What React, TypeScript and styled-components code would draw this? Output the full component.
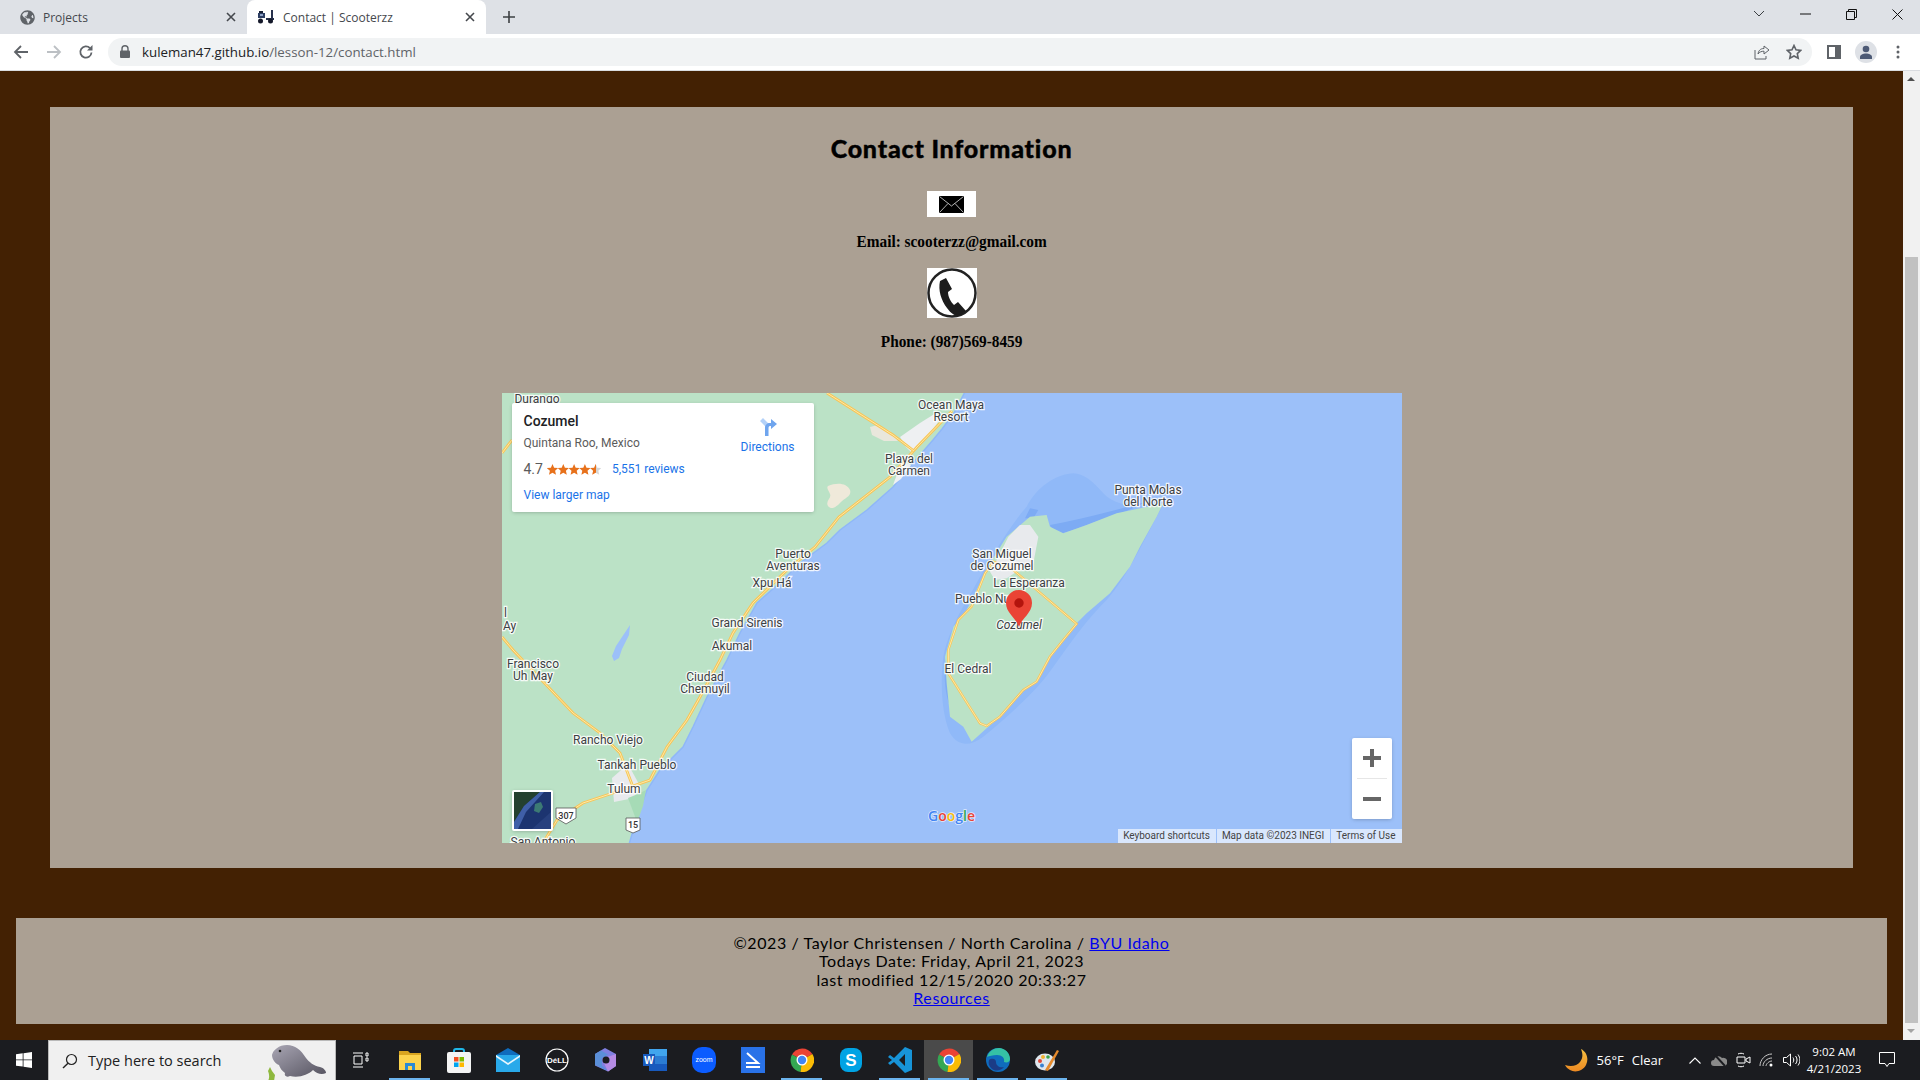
import styled, { createGlobalStyle } from "styled-components"
import { FaGlobeAmericas } from "react-icons/fa"
import { ReactNode } from "react"

const GlobalStyle = createGlobalStyle`
  html, body { margin: 0; padding: 0; height: 100%; overflow: hidden; }
  * { box-sizing: border-box; }
`

// browser chrome

function CloseIcon() {
  return (
    <svg width="10" height="10" viewBox="0 0 10 10">
      <path d="M1 1l8 8M9 1l-8 8" stroke="#45484d" strokeWidth="1.6" />
    </svg>
  )
}

function ScooterFavicon() {
  return (
    <svg width="18" height="14" viewBox="0 0 18 14">
      <path d="M1 3h7v5H1z" fill="#2c3e63" />
      <path d="M2 1h4v2H2z" fill="#1a2238" />
      <path d="M9 8h8v2H9zM14 0h2v9h-2z" fill="#27314c" />
      <path d="M3 4h3v2H3z" fill="#8fa3c8" />
      <circle cx="3.500" cy="11" r="2.500" fill="#15192a" />
      <circle cx="13.500" cy="11" r="2.500" fill="#15192a" />
    </svg>
  )
}

function BrowserTop() {
  return (
    <>
      <TabStrip>
        <Tab>
          <FaGlobeAmericas size={15} color="#5f6368" />
          <TabTitle>Projects</TabTitle>
          <CloseIcon />
        </Tab>
        <Tab $active>
          <ScooterFavicon />
          <TabTitle>Contact | Scooterzz</TabTitle>
          <CloseIcon />
        </Tab>
        <NewTab>
          <svg width="12" height="12" viewBox="0 0 12 12">
            <path d="M6 0v12M0 6h12" stroke="#3c4043" strokeWidth="1.6" />
          </svg>
        </NewTab>
        <WindowButtons>
          <WindowButton>
            <svg width="12" height="8" viewBox="0 0 12 8">
              <path d="M1 1l5 5 5-5" fill="none" stroke="#3c4043" />
            </svg>
          </WindowButton>
          <WindowButton>
            <svg width="11" height="2" viewBox="0 0 11 2">
              <path d="M0 1h11" stroke="#111" />
            </svg>
          </WindowButton>
          <WindowButton>
            <svg width="11" height="11" viewBox="0 0 11 11">
              <path d="M.5 2.500h8v8h-8zM2.500 2.500v-2h8v8h-2" fill="none" stroke="#111" />
            </svg>
          </WindowButton>
          <WindowButton>
            <svg width="11" height="11" viewBox="0 0 11 11">
              <path d="M.5.500l10 10M10.500.500l-10 10" stroke="#111" />
            </svg>
          </WindowButton>
        </WindowButtons>
      </TabStrip>
      <Toolbar>
        <NavButton>
          <svg width="16" height="16" viewBox="0 0 16 16">
            <path d="M15 8H2M8 2L2 8l6 6" fill="none" stroke="#5f6368" strokeWidth="1.8" />
          </svg>
        </NavButton>
        <NavButton>
          <svg width="16" height="16" viewBox="0 0 16 16">
            <path d="M1 8h13M8 2l6 6-6 6" fill="none" stroke="#bcc0c4" strokeWidth="1.8" />
          </svg>
        </NavButton>
        <NavButton>
          <svg width="16" height="16" viewBox="0 0 16 16">
            <path d="M13.500 8.500a5.600 5.600 0 1 1-1.500-4.300" fill="none" stroke="#5f6368" strokeWidth="1.8" />
            <path d="M14.500 1v5.500H9z" fill="#5f6368" />
          </svg>
        </NavButton>
        <Omnibox>
          <svg width="10" height="13" viewBox="0 0 10 13">
            <path d="M2 6V3.800a3 3 0 0 1 6 0V6" fill="none" stroke="#5f6368" strokeWidth="1.4" />
            <rect y="5.500" width="10" height="7.500" rx="1" fill="#5f6368" />
          </svg>
          <Url>
            kuleman47.github.io<UrlPath>/lesson-12/contact.html</UrlPath>
          </Url>
          <OmniActions>
            <svg width="16" height="16" viewBox="0 0 16 16">
              <path d="M15 6l-5-4v2.500C6 4.500 4.500 7 4 10c1.500-2 3.500-2.800 6-2.800V10zM1 6v9h11v-3" fill="none" stroke="#5f6368" />
            </svg>
            <svg width="16" height="16" viewBox="0 0 16 16">
              <path d="M8 1.500l2 4.300 4.700.6-3.400 3.200.9 4.700L8 12l-4.200 2.300.9-4.700L1.300 6.400 6 5.800z" fill="none" stroke="#5f6368" strokeWidth="1.600" />
            </svg>
          </OmniActions>
        </Omnibox>
        <ToolbarRight>
          <svg width="14" height="14" viewBox="0 0 14 14">
            <path d="M0 0h14v14H0z" fill="#5f6368" />
            <path d="M2 2h6v10H2z" fill="#fff" />
          </svg>
          <Avatar>
            <svg width="14" height="14" viewBox="0 0 14 14">
              <circle cx="7" cy="4" r="3.300" fill="#4d5a75" />
              <path d="M1 14v-2c0-2 3-3.500 6-3.500s6 1.500 6 3.500v2z" fill="#4d5a75" />
            </svg>
          </Avatar>
          <MenuDots width="4" height="14" viewBox="0 0 4 14">
            <circle cx="2" cy="2" r="1.500" fill="#5f6368" />
            <circle cx="2" cy="7" r="1.500" fill="#5f6368" />
            <circle cx="2" cy="12" r="1.500" fill="#5f6368" />
          </MenuDots>
        </ToolbarRight>
      </Toolbar>
    </>
  )
}

// map

const mainland =
  "-5,-5 465,-5 452,20 440,36 431,47 411,70 391,94 365,117 338,137 325,150 298,170 281,187 255,210 238,240 225,267 205,304 191,334 181,354 158,377 145,397 135,424 126,455 -5,455"
const highway =
  "450,18 415,54 388,84 337,124 313,154 285,177 251,210 231,240 218,267 198,304 185,327 165,354 148,387 111,400 81,410 55,427 41,450"
const sideRoad = "0,244 11,257 71,320 98,340 118,360 131,394"
const topRoad = "325,0 391,42 412,58"

function Road({ points }: { points: string }) {
  return (
    <>
      <polyline points={points} fill="none" stroke="#f8c555" strokeWidth="2.800" />
      <polyline points={points} fill="none" stroke="#fde8a8" strokeWidth="1" />
    </>
  )
}

function Shield({ x, y, label, $wide }: { x: number; y: number; label: string; $wide?: boolean }) {
  return (
    <g transform={`translate(${x} ${y})`}>
      <path
        d={$wide ? "M-10-8h20v10l-10 6-10-6z" : "M-7-7h14v12l-7 3-7-3z"}
        fill="#fff"
        stroke="#555"
        strokeWidth=".8"
      />
      <ShieldText y="3" textAnchor="middle">{label}</ShieldText>
    </g>
  )
}

function MapDrawing() {
  return (
    <MapSvg viewBox="0 0 900 450">
      <rect width="900" height="450" fill="#9cc0f9" />
      <polygon points={mainland} fill="#bbe2c6" stroke="#8fb7f8" strokeWidth="1.500" />
      <path d="M326 93c9-4 19-3 22 4 2 6-5 8-9 12s-9 9-13 4c-3-5 4-8 2-12-1-3-4-6-2-8z" fill="#efe9da" />
      <path d="M368 34l8-2 12 6 8 10-14 0-12-6z" fill="#e9e7dc" />
      <path d="M398 44l20-14 16-10 6 4-18 24-12 12-6-6z" fill="#eef0f2" />
      <path d="M391 92l6-16 8-6 4 2-10 14z" fill="#eef0f2" />
      <path d="M110 385l16-14 12 22-6 12-20 4z" fill="#e8eaed" />
      <path d="M126 405l9 24-4 12 10-28 3-16-8 4z" fill="#a6dbb6" />
      <path d="M128 232l-1 10-7 14-3 9-5 3-2-5 4-10 8-12z" fill="#9cc0f9" />

      <Road points={highway} />
      <Road points={sideRoad} />
      <Road points={topRoad} />
      <Road points="0,60 10,47" />

      <g transform="translate(428 57) scale(.3333)">
        <path
          d="M430 70C360 75 310 130 290 170C250 215 190 310 150 380C120 440 60 520 40 620C30 700 35 790 60 850C85 890 120 890 160 860C220 810 290 750 340 690C390 630 440 540 530 450C600 370 640 270 700 165C640 170 560 175 520 130C490 95 460 70 430 70Z"
          fill="#90b9f8"
        />
        <path d="M360 225C420 215 520 190 640 158C600 185 520 205 470 225C430 240 390 255 375 250Z" fill="#7dabf4" />
        <polygon points="285,205 300,175 325,180 310,205" fill="#7dabf4" />
        <path d="M45 640C55 590 60 570 70 540C60 620 65 700 75 790C55 770 40 720 45 640Z" fill="#80adf4" />
        <polygon
          points="300,200 350,195 360,230 400,250 470,225 560,190 700,160 680,200 630,290 600,350 540,430 470,490 440,520 400,570 360,620 320,695 280,720 210,800 170,835 125,875 100,830 60,800 50,700 45,620 70,530 110,480 150,400 180,340 230,260"
          fill="#bbe2c6"
        />
        <polygon points="270,225 300,225 325,260 310,340 260,365 230,385 195,390 180,365 200,330 235,260" fill="#e8eaed" />
        <polygon
          points="190,335 250,360 440,522 400,570 360,620 320,695 280,720 210,800 170,828 150,820 55,670 55,600 85,510 125,470 165,370"
          fill="none"
          stroke="#f8c555"
          strokeWidth="7"
        />
        <polygon
          points="190,335 250,360 440,522 400,570 360,620 320,695 280,720 210,800 170,828 150,820 55,670 55,600 85,510 125,470 165,370"
          fill="none"
          stroke="#fde8a8"
          strokeWidth="3"
        />
      </g>

      <MapLabel x="35" y="10" textAnchor="middle">Durango</MapLabel>
      <MapLabel x="449" y="16" textAnchor="middle">Ocean Maya</MapLabel>
      <MapLabel x="449" y="28" textAnchor="middle">Resort</MapLabel>
      <MapLabel x="407" y="70" textAnchor="middle">Playa del</MapLabel>
      <MapLabel x="407" y="82" textAnchor="middle">Carmen</MapLabel>
      <MapLabel x="291" y="165" textAnchor="middle">Puerto</MapLabel>
      <MapLabel x="291" y="177" textAnchor="middle">Aventuras</MapLabel>
      <MapLabel x="270" y="194" textAnchor="middle">Xpu Há</MapLabel>
      <MapLabel x="245" y="234" textAnchor="middle">Grand Sirenis</MapLabel>
      <MapLabel x="230" y="257" textAnchor="middle">Akumal</MapLabel>
      <MapLabel x="2" y="224">l</MapLabel>
      <MapLabel x="1" y="237">Ay</MapLabel>
      <MapLabel x="31" y="275" textAnchor="middle">Francisco</MapLabel>
      <MapLabel x="31" y="287" textAnchor="middle">Uh May</MapLabel>
      <MapLabel x="203" y="288" textAnchor="middle">Ciudad</MapLabel>
      <MapLabel x="203" y="300" textAnchor="middle">Chemuyil</MapLabel>
      <MapLabel x="106" y="351" textAnchor="middle">Rancho Viejo</MapLabel>
      <MapLabel x="135" y="376" textAnchor="middle">Tankah Pueblo</MapLabel>
      <MapLabel x="122" y="400" textAnchor="middle">Tulum</MapLabel>
      <MapLabel x="41" y="453" textAnchor="middle">San Antonio</MapLabel>
      <MapLabel x="646" y="101" textAnchor="middle">Punta Molas</MapLabel>
      <MapLabel x="646" y="113" textAnchor="middle">del Norte</MapLabel>
      <MapLabel x="500" y="165" textAnchor="middle">San Miguel</MapLabel>
      <MapLabel x="500" y="177" textAnchor="middle">de Cozumel</MapLabel>
      <MapLabel x="527" y="194" textAnchor="middle">La Esperanza</MapLabel>
      <MapLabel x="453" y="210">Pueblo Nuevo</MapLabel>
      <MapLabel x="517" y="236" textAnchor="middle" fontStyle="italic">Cozumel</MapLabel>
      <MapLabel x="466" y="280" textAnchor="middle">El Cedral</MapLabel>

      <Shield x={64} y={423} label="307" $wide />
      <Shield x={131} y={432} label="15" />

      <path d="M517 234c-3-9-13-14-13-24a13 13 0 0 1 26 0c0 10-10 15-13 24z" fill="#ea4335" />
      <circle cx="517" cy="210" r="4.700" fill="#b3140d" />

      <GoogleMark x="426" y="428">
        <tspan fill="#4285f4">G</tspan>
        <tspan fill="#ea4335">o</tspan>
        <tspan fill="#fbbc05">o</tspan>
        <tspan fill="#4285f4">g</tspan>
        <tspan fill="#34a853">l</tspan>
        <tspan fill="#ea4335">e</tspan>
      </GoogleMark>
    </MapSvg>
  )
}

function Stars() {
  const star = "M5.500 0l1.600 3.700 4 .4-3 2.700.9 3.900-3.500-2-3.500 2 .9-3.900-3-2.700 4-.4z"
  return (
    <svg width="54" height="11" viewBox="0 0 54 11">
      <defs>
        <linearGradient id="half">
          <stop offset="55%" stopColor="#e7711b" />
          <stop offset="55%" stopColor="#d6d6d6" />
        </linearGradient>
      </defs>
      {[0, 1, 2, 3].map((i) => (
        <path key={i} d={star} transform={`translate(${i * 10.800} 0)`} fill="#e7711b" />
      ))}
      <path d={star} transform="translate(43.200 0)" fill="url(#half)" />
    </svg>
  )
}

function MapEmbed() {
  return (
    <MapFrame>
      <MapDrawing />
      <InfoCard>
        <InfoMain>
          <PlaceName>Cozumel</PlaceName>
          <PlaceRegion>Quintana Roo, Mexico</PlaceRegion>
          <RatingRow>
            <RatingValue>4.7</RatingValue>
            <Stars />
            <MapLink>5,551 reviews</MapLink>
          </RatingRow>
          <MapLink>View larger map</MapLink>
        </InfoMain>
        <Directions>
          <svg width="18" height="19" viewBox="0 0 18 19">
            <path d="M1 4l3-3 6 6v12H6V9z" fill="#b3d1f8" />
            <path d="M6 19v-8c0-3 2-5 5-5h1V2l6 5-6 5V9h-1c-1 0-2 1-2 2v8z" fill="#6fa5ee" />
          </svg>
          <MapLink>Directions</MapLink>
        </Directions>
      </InfoCard>
      <SatelliteThumb>
        <svg width="37" height="37" viewBox="0 0 37 37">
          <rect width="37" height="37" fill="#1c3470" />
          <path d="M0 0h26L10 14 0 30z" fill="#24402f" />
          <path d="M0 30l10-16L26 0h4L12 20 4 37H0z" fill="#3f5fa8" />
          <path d="M21 12l6-2 2 5-4 6-5-2z" fill="#3c7a74" />
          <path d="M37 20v17H18z" fill="#27407e" />
        </svg>
      </SatelliteThumb>
      <ZoomControl>
        <ZoomButton>
          <svg width="18" height="18" viewBox="0 0 18 18">
            <path d="M9 0v18M0 9h18" stroke="#666" strokeWidth="4" />
          </svg>
        </ZoomButton>
        <ZoomDivider />
        <ZoomButton>
          <svg width="18" height="4" viewBox="0 0 18 4">
            <path d="M0 2h18" stroke="#666" strokeWidth="4" />
          </svg>
        </ZoomButton>
      </ZoomControl>
      <Attribution>
        <AttributionItem>Keyboard shortcuts</AttributionItem>
        <AttributionItem>Map data ©2023 INEGI</AttributionItem>
        <AttributionItem>Terms of Use</AttributionItem>
      </Attribution>
    </MapFrame>
  )
}

// taskbar

function ChromeLogo() {
  return (
    <svg width="24" height="24" viewBox="0 0 24 24">
      <path d="M12 12L2 6.500A12 12 0 0 1 22.400 6z" fill="#ea4335" />
      <path d="M12 12l-10-5.500A12 12 0 0 0 10.500 24z" fill="#34a853" />
      <path d="M12 12l10.400-6A12 12 0 0 1 10.500 24z" fill="#fbbc05" />
      <circle cx="12" cy="12" r="5.500" fill="#fff" />
      <circle cx="12" cy="12" r="4.200" fill="#4285f4" />
    </svg>
  )
}

function Manatee() {
  return (
    <ManateeArt width="66" height="40" viewBox="0 0 66 40">
      <defs>
        <linearGradient id="manatee" x1="0" y1="0" x2="1" y2="1">
          <stop offset="0" stopColor="#a9a6b4" />
          <stop offset="1" stopColor="#55535f" />
        </linearGradient>
      </defs>
      <path d="M2 40c2-4 1-7 0-10l2-4 2 4 3 4-1 6z" fill="#8eb83e" />
      <path
        d="M6 14c1-5 7-10 15-10 8 0 14 5 19 13 3 4 8 8 14 9 4 1 6 4 6 6-4 2-9 1-13-3-5 5-14 8-23 6-4 2-6-1-5-3-3-2-5-5-6-8-3-1-7-5-7-10z"
        fill="url(#manatee)"
      />
      <circle cx="14" cy="10" r="1.300" fill="#222" />
    </ManateeArt>
  )
}

function TaskIcon({ children, $active, $running }: { children: ReactNode; $active?: boolean; $running?: boolean }) {
  return (
    <TaskSlot $active={$active}>
      {children}
      {$running && <RunningBar />}
    </TaskSlot>
  )
}

function Taskbar() {
  return (
    <Bar>
      <StartButton>
        <svg width="16" height="16" viewBox="0 0 16 16">
          <path d="M0 2.300l6.700-1v6.200H0zM7.500 1.200L16 0v7.500H7.500zM0 8.300h6.700v6.300L0 13.700zM7.500 8.300H16V16l-8.500-1.200z" fill="#fff" />
        </svg>
      </StartButton>
      <SearchBox>
        <svg width="16" height="16" viewBox="0 0 16 16">
          <circle cx="9.500" cy="6.500" r="5" fill="none" stroke="#222" strokeWidth="1.200" />
          <path d="M6 10.200L1 15" stroke="#222" strokeWidth="1.400" />
        </svg>
        <SearchText>Type here to search</SearchText>
        <Manatee />
      </SearchBox>
      <TaskIcon>
        <svg width="16" height="16" viewBox="0 0 16 16">
          <path d="M0 1h10M0 15h10M1 4h8v8H1zM13 1h2v3h-2zM13 6h2v3h-2z" fill="none" stroke="#fff" />
        </svg>
      </TaskIcon>
      <TaskIcon $running>
        <svg width="22" height="20" viewBox="0 0 22 20">
          <path d="M0 1h9l2 2h11v4H0z" fill="#d9a520" />
          <path d="M0 5h22v15H0z" fill="#fcd34d" />
          <path d="M6 13h10v7H6z" fill="#2a8ad4" />
          <path d="M9 16h4v4H9z" fill="#fcd34d" />
        </svg>
      </TaskIcon>
      <TaskIcon>
        <svg width="24" height="25" viewBox="0 0 24 25">
          <path d="M7 5V3a2 2 0 0 1 2-2h6a2 2 0 0 1 2 2v2" fill="none" stroke="#1fb6e8" strokeWidth="2" />
          <rect y="4" width="24" height="21" rx="2" fill="#f4f4f4" />
          <path d="M7 9h4.500v4.500H7z" fill="#f25022" />
          <path d="M12.500 9H17v4.500h-4.500z" fill="#7fba00" />
          <path d="M7 14.500h4.500V19H7z" fill="#00a4ef" />
          <path d="M12.500 14.500H17V19h-4.500z" fill="#ffb900" />
        </svg>
      </TaskIcon>
      <TaskIcon>
        <svg width="24" height="24" viewBox="0 0 24 24">
          <path d="M12 0l12 7v17H0V7z" fill="#0f6cbd" />
          <path d="M0 7h24v17H0z" fill="#29a9ea" />
          <path d="M0 7l12 8 12-8v2l-12 8L0 9z" fill="#e8f6fd" />
        </svg>
      </TaskIcon>
      <TaskIcon>
        <svg width="24" height="24" viewBox="0 0 24 24">
          <circle cx="12" cy="12" r="11" fill="none" stroke="#fff" strokeWidth="1.200" />
          <DellText x="12" y="15" textAnchor="middle">DéLL</DellText>
        </svg>
      </TaskIcon>
      <TaskIcon>
        <svg width="21" height="24" viewBox="0 0 21 24">
          <path d="M10 0l11 6v12l-8 5.500-13-6V6z" fill="#7f7fe0" />
          <path d="M0 6l6-3.500 7 4-6 4v7l6 5.500-13-6z" fill="#5b8fd8" />
          <path d="M7 11l14-5v12l-8 5.500z" fill="#b58be4" />
          <circle cx="11" cy="12" r="3.500" fill="#1b1c20" />
        </svg>
      </TaskIcon>
      <TaskIcon>
        <svg width="24" height="24" viewBox="0 0 24 24">
          <path d="M6 1h18v22H6z" fill="#2b7cd3" />
          <path d="M6 1h18v7H6z" fill="#41a5ee" />
          <path d="M6 16h18v7H6z" fill="#185abd" />
          <rect y="6" width="12" height="12" fill="#185abd" />
          <WordText x="6" y="16" textAnchor="middle">W</WordText>
        </svg>
      </TaskIcon>
      <TaskIcon>
        <svg width="24" height="26" viewBox="0 0 24 26">
          <rect width="24" height="26" rx="10" fill="#0b5cff" />
          <ZoomText x="12" y="15" textAnchor="middle">zoom</ZoomText>
        </svg>
      </TaskIcon>
      <TaskIcon>
        <svg width="24" height="26" viewBox="0 0 24 26">
          <rect width="24" height="26" fill="#2972e8" />
          <path d="M6 6l11 10H5M5 20h14" fill="none" stroke="#fff" strokeWidth="2" />
        </svg>
      </TaskIcon>
      <TaskIcon $running>
        <ChromeLogo />
      </TaskIcon>
      <TaskIcon>
        <svg width="22" height="24" viewBox="0 0 22 24">
          <rect width="22" height="24" rx="8" fill="#00a3e4" />
          <SkypeText x="11" y="18" textAnchor="middle">S</SkypeText>
        </svg>
      </TaskIcon>
      <TaskIcon $running>
        <svg width="24" height="26" viewBox="0 0 24 26">
          <path d="M17 0l7 3v20l-7 3L6 15l-4 3-2-2 4-3-4-3 2-2 4 3zm0 7l-6 6 6 6z" fill="#1794d8" />
        </svg>
      </TaskIcon>
      <TaskIcon $active $running>
        <ChromeLogo />
      </TaskIcon>
      <TaskIcon $running>
        <svg width="24" height="24" viewBox="0 0 24 24">
          <circle cx="12" cy="12" r="12" fill="#0f6cbd" />
          <path d="M1 9C3 3 8 0 13 0c6 0 11 5 11 11 0 3-3 4-6 3 1-4-2-7-7-7-4 0-8 1-10 2z" fill="#35c1a5" />
          <path d="M10 14c0 4 4 6 8 5-3 4-9 5-13 1-2-2-3-5-2-8 2-2 7-2 7 2z" fill="#1b3c86" />
        </svg>
      </TaskIcon>
      <TaskIcon $running>
        <svg width="24" height="24" viewBox="0 0 24 24">
          <ellipse cx="10" cy="14" rx="10" ry="8.500" fill="#dfe7ee" />
          <circle cx="5" cy="13" r="2" fill="#e04a3a" />
          <circle cx="8" cy="9" r="2" fill="#f2b134" />
          <circle cx="13" cy="9" r="1.800" fill="#3ca34a" />
          <circle cx="7" cy="17.500" r="2" fill="#3b82d0" />
          <path d="M10 22L22 2l2 1L13 23z" fill="#e58a2d" />
        </svg>
      </TaskIcon>

      <Tray>
        <Weather>
          <svg width="24" height="24" viewBox="0 0 24 24">
            <defs>
              <linearGradient id="moon" x1="0" y1="0" x2="0" y2="1">
                <stop offset="0" stopColor="#f5c042" />
                <stop offset="1" stopColor="#ee8a22" />
              </linearGradient>
            </defs>
            <path d="M16 1c6 3 8 10 5 16s-11 8-16 5c-2-1-4-3-5-5 6 2 12 1 15-3s3-8 1-13z" fill="url(#moon)" />
          </svg>
          <WeatherText>56°F</WeatherText>
          <WeatherText>Clear</WeatherText>
        </Weather>
        <TrayIcon>
          <svg width="12" height="7" viewBox="0 0 12 7">
            <path d="M.5 6.500L6 1l5.500 5.500" fill="none" stroke="#fff" strokeWidth="1.100" />
          </svg>
        </TrayIcon>
        <TrayIcon>
          <svg width="16" height="12" viewBox="0 0 16 12">
            <path d="M3 12a3 3 0 0 1 0-6 4.500 4.500 0 0 1 8-2 3.500 3.500 0 0 1 2.500 8z" fill="#8a8a8a" />
            <path d="M3 0l11 12" stroke="#1b1c20" strokeWidth="2" />
          </svg>
        </TrayIcon>
        <TrayIcon>
          <svg width="16" height="16" viewBox="0 0 16 16">
            <path d="M2 5h8v6H2zM11 7l4-2v6l-4-2zM3 2c2-1 4-1 6 0M3 14c2 1 4 1 6 0" fill="none" stroke="#fff" />
          </svg>
        </TrayIcon>
        <TrayIcon>
          <svg width="16" height="14" viewBox="0 0 16 14">
            <path d="M1 13C1 7 6 1 13 1M4 13c0-4 4-8 9-8M7 13c0-2 3-5 6-5" fill="none" stroke="#c8c8c8" />
            <circle cx="12" cy="12" r="1.500" fill="#fff" />
          </svg>
        </TrayIcon>
        <TrayIcon>
          <svg width="17" height="14" viewBox="0 0 17 14">
            <path d="M.5 4.500h3L7.500 1v12l-4-3.500h-3zM10 4.500c1 1.500 1 3.500 0 5M12.500 3c2 2.500 2 5.500 0 8M15 1.500c2.500 3.500 2.500 7.500 0 11" fill="none" stroke="#fff" />
          </svg>
        </TrayIcon>
        <Clock>
          <ClockLine>9:02 AM</ClockLine>
          <ClockLine>4/21/2023</ClockLine>
        </Clock>
        <ActionCenter>
          <svg width="16" height="16" viewBox="0 0 16 16">
            <path d="M.5.500h15v11H10l-2 3-2-3H.5z" fill="none" stroke="#fff" />
          </svg>
        </ActionCenter>
      </Tray>
    </Bar>
  )
}

export default function App() {
  return (
    <Screen>
      <GlobalStyle />
      <BrowserTop />
      <Viewport>
        <Page>
          <ContactCard>
            <Heading>Contact Information</Heading>
            <MailImage>
              <svg width="25" height="17" viewBox="0 0 25 17">
                <rect width="25" height="17" fill="#000" />
                <path d="M.5 .5l12 9.500 12-9.500M.5 16.500l8.500-9M24.500 16.500l-8.500-9" fill="none" stroke="#fff" strokeWidth=".7" />
              </svg>
            </MailImage>
            <ContactLine>Email: scooterzz@gmail.com</ContactLine>
            <PhoneImage>
              <svg width="50" height="50" viewBox="0 0 50 50">
                <circle cx="25" cy="25" r="23.500" fill="none" stroke="#222" strokeWidth="2.500" />
                <path
                  d="M13 13l6-3 6 11-4 3c0 5 3 10 6 13l4-3 8 9-5 4c-4 2-9 0-14-7-6-8-9-18-7-27z"
                  fill="#1c1c1c"
                />
              </svg>
            </PhoneImage>
            <ContactLine $spaced>Phone: (987)569-8459</ContactLine>
            <MapEmbed />
          </ContactCard>
          <Footer>
            <div>©2023 / Taylor Christensen / North Carolina / <FooterLink href="#">BYU Idaho</FooterLink></div>
            <div>Todays Date: Friday, April 21, 2023</div>
            <div>last modified 12/15/2020 20:33:27</div>
            <div><FooterLink href="#">Resources</FooterLink></div>
          </Footer>
        </Page>
        <Scrollbar>
          <ScrollArrow $up />
          <ScrollThumb />
          <ScrollArrow />
        </Scrollbar>
      </Viewport>
      <Taskbar />
    </Screen>
  )
}

const Screen = styled.div`
  width: 1920px;
  height: 1080px;
  display: flex;
  flex-direction: column;
  overflow: hidden;
  font-family: "Open Sans", "Noto Sans", sans-serif;
`

const TabStrip = styled.div`
  height: 34px;
  flex: none;
  display: flex;
  background: #dee1e6;
  padding-left: 8px;
`

const Tab = styled.div<{ $active?: boolean }>`
  width: 239px;
  height: 34px;
  display: flex;
  align-items: center;
  gap: 8px;
  padding: 0 11px 0 ${(p) => (p.$active ? "10px" : "12px")};
  border-radius: 8px 8px 0 0;
  background: ${(p) => (p.$active ? "#fff" : "transparent")};
`

const TabTitle = styled.span`
  flex: 1;
  font-size: 12px;
  color: #45484d;
`

const NewTab = styled.div`
  width: 46px;
  display: flex;
  align-items: center;
  justify-content: center;
`

const WindowButtons = styled.div`
  margin-left: auto;
  display: flex;
`

const WindowButton = styled.div`
  width: 46px;
  height: 28px;
  display: flex;
  align-items: center;
  justify-content: center;
`

const Toolbar = styled.div`
  height: 37px;
  flex: none;
  display: flex;
  align-items: center;
  background: #fff;
  border-bottom: 1px solid #dadce0;
  padding: 0 0 1px 5px;
`

const NavButton = styled.div`
  width: 32.500px;
  display: flex;
  justify-content: center;
`

const Omnibox = styled.div`
  width: 1704px;
  height: 28px;
  margin-left: 5.500px;
  display: flex;
  align-items: center;
  gap: 12px;
  padding: 0 10px 0 12px;
  border-radius: 14px;
  background: #f1f3f4;
`

const Url = styled.span`
  font-size: 13.300px;
  color: #202124;
`

const UrlPath = styled.span`
  color: #5f6368;
`

const OmniActions = styled.div`
  margin-left: auto;
  display: flex;
  align-items: center;
  gap: 16px;
`

const ToolbarRight = styled.div`
  display: flex;
  align-items: center;
  margin-left: 15px;
  gap: 14px;
`

const MenuDots = styled.svg`
  margin-left: 5px;
`

const Avatar = styled.div`
  width: 22px;
  height: 22px;
  border-radius: 50%;
  background: #dee1e6;
  display: flex;
  align-items: center;
  justify-content: center;
`

const Viewport = styled.div`
  flex: 1;
  min-height: 0;
  display: flex;
`

const Page = styled.main`
  flex: 1;
  background: #432103;
  padding: 36px 16px 0;
`

const ContactCard = styled.section`
  margin: 0 34px 50px;
  height: 761px;
  padding-top: 24px;
  background: #aba093;
  display: flex;
  flex-direction: column;
  align-items: center;
`

const Heading = styled.h1`
  margin: 0 0 26px;
  font-family: "Lato", sans-serif;
  font-weight: 900;
  font-size: 25px;
  line-height: 34px;
  letter-spacing: 0.800px;
  -webkit-text-stroke: 0.400px #000;
  color: #000;
`

const MailImage = styled.div`
  width: 49px;
  height: 26px;
  background: #fff;
  display: flex;
  align-items: center;
  justify-content: center;
`

const ContactLine = styled.p<{ $spaced?: boolean }>`
  margin: ${(p) => (p.$spaced ? "14px 0 41px" : "15px 0 16px")};
  font-family: "Liberation Serif", serif;
  font-weight: 700;
  font-size: 17px;
  line-height: 20px;
  color: #000;
  transform: scaleX(0.900);
`

const PhoneImage = styled.div`
  width: 50px;
  height: 50px;
  background: #fff;
  svg { display: block; }
`

const MapFrame = styled.div`
  position: relative;
  width: 900px;
  height: 450px;
  flex: none;
  overflow: hidden;
  font-family: "Roboto", sans-serif;
`

const MapSvg = styled.svg`
  display: block;
  width: 900px;
  height: 450px;
`

const MapLabel = styled.text`
  font-family: "Roboto", sans-serif;
  font-size: 12px;
  fill: #3c4043;
  stroke: rgba(255, 255, 255, 0.85);
  stroke-width: 2.500px;
  paint-order: stroke;
`

const ShieldText = styled.text`
  font-family: "Roboto", sans-serif;
  font-size: 9px;
  font-weight: 500;
  fill: #333;
`

const GoogleMark = styled.text`
  font-family: "Open Sans", sans-serif;
  font-size: 14px;
  font-weight: 600;
  stroke: rgba(255, 255, 255, 0.7);
  stroke-width: 1.500px;
  paint-order: stroke;
`

const InfoCard = styled.div`
  position: absolute;
  top: 10px;
  left: 10px;
  width: 302px;
  height: 109px;
  padding: 8px 12px;
  background: #fff;
  border-radius: 2px;
  box-shadow: 0 1px 4px -1px rgba(0, 0, 0, 0.3);
  display: flex;
  justify-content: space-between;
`

const InfoMain = styled.div`
  display: flex;
  flex-direction: column;
  align-items: flex-start;
`

const PlaceName = styled.div`
  font-size: 14px;
  font-weight: 500;
  line-height: 20px;
  color: #202124;
`

const PlaceRegion = styled.div`
  margin-top: 3px;
  font-size: 12px;
  line-height: 18px;
  color: #5b5b5b;
`

const RatingRow = styled.div`
  margin-top: 7px;
  height: 20px;
  display: flex;
  align-items: center;
`

const RatingValue = styled.span`
  margin-right: 4px;
  font-size: 14px;
  color: #5b5b5b;
`

const MapLink = styled.span`
  font-size: 12px;
  line-height: 20px;
  color: #1a73e8;

  ${RatingRow} & {
    margin-left: 11px;
  }
  ${InfoMain} > & {
    margin-top: 6px;
  }
`

const Directions = styled.div`
  margin: 6px 7px 0 0;
  display: flex;
  flex-direction: column;
  align-items: center;
  gap: 1px;
`

const SatelliteThumb = styled.div`
  position: absolute;
  left: 10px;
  bottom: 12px;
  width: 41px;
  height: 41px;
  border: 2px solid #fff;
  border-radius: 2px;
  box-shadow: 0 1px 4px -1px rgba(0, 0, 0, 0.3);
  overflow: hidden;
  svg { display: block; }
`

const ZoomControl = styled.div`
  position: absolute;
  right: 10px;
  bottom: 24px;
  width: 40px;
  height: 81px;
  background: #fff;
  border-radius: 2px;
  box-shadow: 0 1px 4px -1px rgba(0, 0, 0, 0.3);
  display: flex;
  flex-direction: column;
  align-items: center;
`

const ZoomButton = styled.div`
  flex: 1;
  display: flex;
  align-items: center;
  justify-content: center;
`

const ZoomDivider = styled.div`
  width: 30px;
  height: 1px;
  background: #e6e6e6;
`

const Attribution = styled.div`
  position: absolute;
  right: 0;
  bottom: 0;
  height: 14px;
  display: flex;
  gap: 1px;
`

const AttributionItem = styled.span`
  padding: 0 6px 0 5px;
  background: rgba(255, 255, 255, 0.62);
  font-size: 10px;
  line-height: 14px;
  color: #444;
`

const Footer = styled.footer`
  height: 106px;
  padding-top: 16px;
  background: #aba093;
  text-align: center;
  font-family: "Lato", sans-serif;
  font-size: 16px;
  line-height: 18.400px;
  letter-spacing: 0.580px;
  color: #000;
`

const FooterLink = styled.a`
  color: #0000ee;
  text-decoration: underline;
`

const Scrollbar = styled.aside`
  width: 17px;
  flex: none;
  background: #f1f1f1;
  display: flex;
  flex-direction: column;
  align-items: center;
`

const ScrollArrow = styled.div<{ $up?: boolean }>`
  height: 17px;
  width: 17px;
  flex: none;
  position: relative;
  &::after {
    content: "";
    position: absolute;
    left: 4px;
    top: 6px;
    border-left: 4px solid transparent;
    border-right: 4px solid transparent;
    ${(p) => (p.$up ? "border-bottom: 4px solid #505050;" : "border-top: 4px solid #a3a3a3;")}
  }
`

const ScrollThumb = styled.div`
  width: 13px;
  margin-top: 169px;
  flex: 1;
  background: #c1c1c1;
`

const Bar = styled.footer`
  height: 40px;
  flex: none;
  display: flex;
  align-items: center;
  background: #1b1c20;
`

const StartButton = styled.div`
  width: 48px;
  height: 40px;
  display: flex;
  align-items: center;
  justify-content: center;
`

const SearchBox = styled.div`
  position: relative;
  width: 288px;
  height: 40px;
  display: flex;
  align-items: center;
  gap: 10px;
  padding-left: 13px;
  background: #f0f0f0;
  border: 1px solid #b9b9b9;
  border-bottom: 0;
  overflow: hidden;
`

const SearchText = styled.span`
  font-size: 14.500px;
  color: #202020;
`

const ManateeArt = styled.svg`
  position: absolute;
  right: 3px;
  top: 0;
`

const TaskSlot = styled.div<{ $active?: boolean }>`
  position: relative;
  width: 49px;
  height: 40px;
  flex: none;
  display: flex;
  align-items: center;
  justify-content: center;
  background: ${(p) => (p.$active ? "#4a4a4a" : "transparent")};
`

const RunningBar = styled.div`
  position: absolute;
  left: 4px;
  right: 4px;
  bottom: 0;
  height: 2px;
  background: #6cb4ee;
`

const DellText = styled.text`
  font-family: "Liberation Sans", sans-serif;
  font-size: 8px;
  font-weight: 700;
  fill: #fff;
`

const WordText = styled.text`
  font-family: "Liberation Sans", sans-serif;
  font-size: 10px;
  font-weight: 700;
  fill: #fff;
`

const ZoomText = styled.text`
  font-family: "Liberation Sans", sans-serif;
  font-size: 7px;
  fill: #fff;
`

const SkypeText = styled.text`
  font-family: "Liberation Sans", sans-serif;
  font-size: 17px;
  font-weight: 700;
  fill: #fff;
`

const Tray = styled.div`
  margin-left: auto;
  display: flex;
  align-items: center;
  height: 40px;
  padding-right: 11px;
`

const Weather = styled.div`
  display: flex;
  align-items: center;
  gap: 8px;
  margin-right: 20px;
`

const WeatherText = styled.span`
  font-size: 13px;
  color: #fff;
`

const TrayIcon = styled.div`
  width: 24px;
  display: flex;
  justify-content: center;
`

const Clock = styled.div`
  width: 62px;
  display: flex;
  flex-direction: column;
  align-items: center;
`

const ClockLine = styled.span`
  font-size: 11.500px;
  line-height: 17px;
  color: #fff;
`

const ActionCenter = styled.div`
  width: 44px;
  display: flex;
  justify-content: center;
`
